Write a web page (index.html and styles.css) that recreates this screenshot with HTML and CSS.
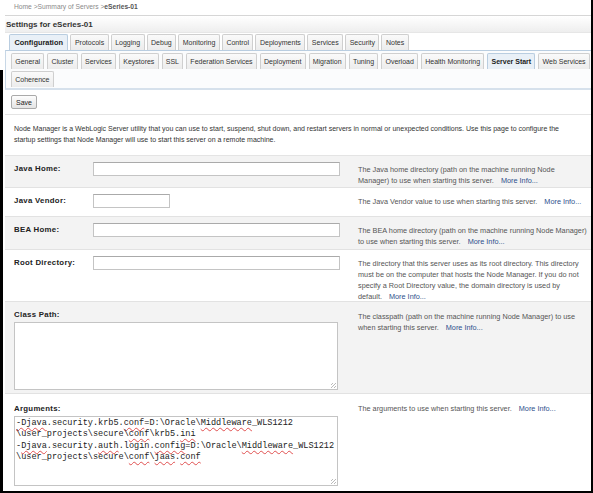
FILE: index.html
```html
<!DOCTYPE html>
<html>
<head>
<meta charset="utf-8">
<link rel="stylesheet" href="styles.css">
</head>
<body>
<div class="page">
  <div class="crumbs">Home &gt;Summary of Servers &gt;<span class="cur">eSeries-01</span></div>
  <div class="panel">
    <div class="title">Settings for eSeries-01</div>
    <div class="tabs">
      <span class="tab active">Configuration</span>
      <span class="tab">Protocols</span>
      <span class="tab">Logging</span>
      <span class="tab">Debug</span>
      <span class="tab">Monitoring</span>
      <span class="tab">Control</span>
      <span class="tab">Deployments</span>
      <span class="tab">Services</span>
      <span class="tab">Security</span>
      <span class="tab">Notes</span>
    </div>
    <div class="subbox">
      <div class="subtabs">
        <span class="stab">General</span>
        <span class="stab">Cluster</span>
        <span class="stab">Services</span>
        <span class="stab">Keystores</span>
        <span class="stab">SSL</span>
        <span class="stab">Federation Services</span>
        <span class="stab">Deployment</span>
        <span class="stab">Migration</span>
        <span class="stab">Tuning</span>
        <span class="stab">Overload</span>
        <span class="stab">Health Monitoring</span>
        <span class="stab active">Server Start</span>
        <span class="stab">Web Services</span>
        <span class="stab">Coherence</span>
      </div>
    </div>
    <div class="toolbar"><button class="btn">Save</button></div>
    <p class="intro">Node Manager is a WebLogic Server utility that you can use to start, suspend, shut down, and restart servers in normal or unexpected conditions. Use this page to configure the<br>startup settings that Node Manager will use to start this server on a remote machine.</p>
    <div class="form">
      <div class="row alt h-java">
        <div class="lbl">Java Home:</div>
        <div class="fld"><span class="inp wide"></span></div>
        <div class="help">The Java home directory (path on the machine running Node<br>Manager) to use when starting this server. <a class="more">More Info...</a></div>
      </div>
      <div class="row h-vendor">
        <div class="lbl">Java Vendor:</div>
        <div class="fld"><span class="inp short"></span></div>
        <div class="help">The Java Vendor value to use when starting this server. <a class="more">More Info...</a></div>
      </div>
      <div class="row alt h-bea">
        <div class="lbl">BEA Home:</div>
        <div class="fld"><span class="inp wide"></span></div>
        <div class="help">The BEA home directory (path on the machine running Node Manager)<br>to use when starting this server. <a class="more">More Info...</a></div>
      </div>
      <div class="row h-root">
        <div class="lbl">Root Directory:</div>
        <div class="fld"><span class="inp wide"></span></div>
        <div class="help">The directory that this server uses as its root directory. This directory<br>must be on the computer that hosts the Node Manager. If you do not<br>specify a Root Directory value, the domain directory is used by<br>default. <a class="more">More Info...</a></div>
      </div>
      <div class="row alt h-class">
        <div class="area-cell">
          <div class="lbl">Class Path:</div>
          <div class="ta"><span class="grip"></span></div>
        </div>
        <div class="help">The classpath (path on the machine running Node Manager) to use<br>when starting this server. <a class="more">More Info...</a></div>
      </div>
      <div class="row h-args">
        <div class="area-cell">
          <div class="lbl">Arguments:</div>
          <div class="ta mono"><span class="sq">-Djava</span>.security.krb5.<span class="sq">conf</span>=D:\Oracle\<span class="sq">Middleware</span>_WLS1212<br>\user_projects\secure\<span class="sq">conf</span>\krb5.<span class="sq">ini</span><br>-<span class="sq">Djava</span>.security.<span class="sq">auth</span>.login.<span class="sq">config</span>=D:\Oracle\<span class="sq">Middleware</span>_WLS1212<br>\user_projects\secure\<span class="sq">conf</span>\<span class="sq">jaas</span>.<span class="sq">conf</span><span class="grip"></span></div>
        </div>
        <div class="help">The arguments to use when starting this server. <a class="more">More Info...</a></div>
      </div>
    </div>
  </div>
  <span class="shade-l"></span>
</div>
</body>
</html>
```

FILE: styles.css
```css
* { box-sizing: border-box; }
html, body { margin: 0; padding: 0; background: #fff; }
body {
  font-family: "Liberation Sans", Arial, sans-serif;
  font-size: 7px;
  color: #333;
}
.page {
  position: relative;
  width: 593px;
  height: 493px;
  overflow: hidden;
  border-right: 2px solid #000;
  border-bottom: 2px solid #000;
  padding-left: 5px;
}
.shade-l {
  position: absolute;
  left: 0;
  top: 70px;
  bottom: 0;
  width: 3px;
  background: #000;
}
.crumbs {
  height: 15px;
  padding: 3px 0 0 9px;
  color: #8a8a8a;
  font-size: 6.7px;
}
.crumbs .cur { color: #555; font-weight: bold; }
.panel {
  border-top: 1px solid #d6d6d6;
}
.title {
  height: 17px;
  padding: 4px 0 0 1px;
  font-weight: bold;
  font-size: 8px;
  color: #333;
  background: linear-gradient(#ffffff, #eeeeee);
  border-bottom: 1px solid #e6e6e6;
}
.tabs {
  display: flex;
  gap: 2px;
  padding: 1px 0 0 4px;
  height: 17px;
  align-items: flex-end;
}
.tab, .stab {
  font-size: 7px;
  color: #333;
  background: linear-gradient(#fafafa, #ececec);
  border: 1px solid #cfcfcf;
  border-bottom: none;
  border-radius: 2px 2px 0 0;
  padding: 0 3.5px;
  height: 16px;
  line-height: 15px;
  white-space: nowrap;
}
.tab.active {
  padding: 0 4.5px;
  font-size: 7.4px;
}
.tab.active, .stab.active {
  font-weight: bold;
  background: #e9f0f7;
  border-color: #b9cde0;
  color: #222;
}
.subbox {
  border-top: 1px solid #b9cde0;
  border-left: 1px solid #c7d7e6;
  border-bottom: 2px solid #d6e1ec;
  background: #fbfcfd;
  padding: 2px 0 1px 5px;
}
.subtabs {
  display: flex;
  flex-wrap: wrap;
  column-gap: 3px;
  row-gap: 2px;
}
.stab { padding: 0 3.2px; }
.toolbar {
  padding: 5px 0 5px 6px;
  border-bottom: 1px solid #e4e4e4;
}
.btn {
  font-family: "Liberation Sans", Arial, sans-serif;
  font-size: 7px;
  color: #222;
  height: 14px;
  padding: 0 4px;
  background: linear-gradient(#fdfdfd, #e4e4e4);
  border: 1px solid #aaa;
  border-radius: 2px;
  line-height: 11px;
}
.intro {
  margin: 0;
  padding: 8px 0 10px 9px;
  line-height: 11px;
  color: #333;
  white-space: nowrap;
  border-bottom: 1px solid #e4e4e4;
}
.row {
  display: grid;
  grid-template-columns: 79px 265px 1fr;
  padding: 6px 0 0 9px;
  border-bottom: 1px solid #e2e2e2;
}
.row.alt { background: #f3f3f3; }
.h-java { height: 32px; }
.h-vendor { height: 29px; }
.h-bea { height: 33px; }
.h-root { height: 52px; }
.h-class { height: 92px; grid-template-columns: 344px 1fr; }
.h-args { height: 100px; grid-template-columns: 344px 1fr; border-bottom: none; padding-top: 8px; }
.lbl {
  font-weight: bold;
  color: #222;
  line-height: 14px;
  font-size: 7.8px;
  letter-spacing: 0.3px;
}
.inp {
  display: block;
  height: 14px;
  background: #fff;
  border: 1px solid #c4c4c4;
  border-top-color: #aaa;
}
.inp.wide { width: 247px; }
.inp.short { width: 77px; }
.help {
  color: #555;
  font-size: 7.3px;
  line-height: 11px;
  padding-top: 1.5px;
  white-space: nowrap;
}
.more { color: #2d4f8c; margin-left: 5px; }
.area-cell .lbl { padding-top: 2px; line-height: 10px; }
.ta {
  position: relative;
  margin-top: 2px;
  width: 324px;
  height: 68px;
  background: #fff;
  border: 1px solid #c4c4c4;
}
.ta.mono {
  font-family: "Liberation Mono", "Courier New", monospace;
  font-size: 8.55px;
  line-height: 11.3px;
  letter-spacing: 0;
  color: #222;
  height: 70px;
  padding: 1px 0 0 1px;
  white-space: nowrap;
  overflow: hidden;
}
.sq {
  text-decoration: underline wavy #e05050;
  text-decoration-thickness: 0.6px;
  text-underline-offset: 1.5px;
}
.grip {
  position: absolute;
  right: 1px;
  bottom: 1px;
  width: 5px;
  height: 5px;
  background: repeating-linear-gradient(135deg, transparent 0 1px, #bbb 1px 2px);
}
.h-class .help { padding-top: 3px; }
.h-args .help { padding-top: 1px; }
```
